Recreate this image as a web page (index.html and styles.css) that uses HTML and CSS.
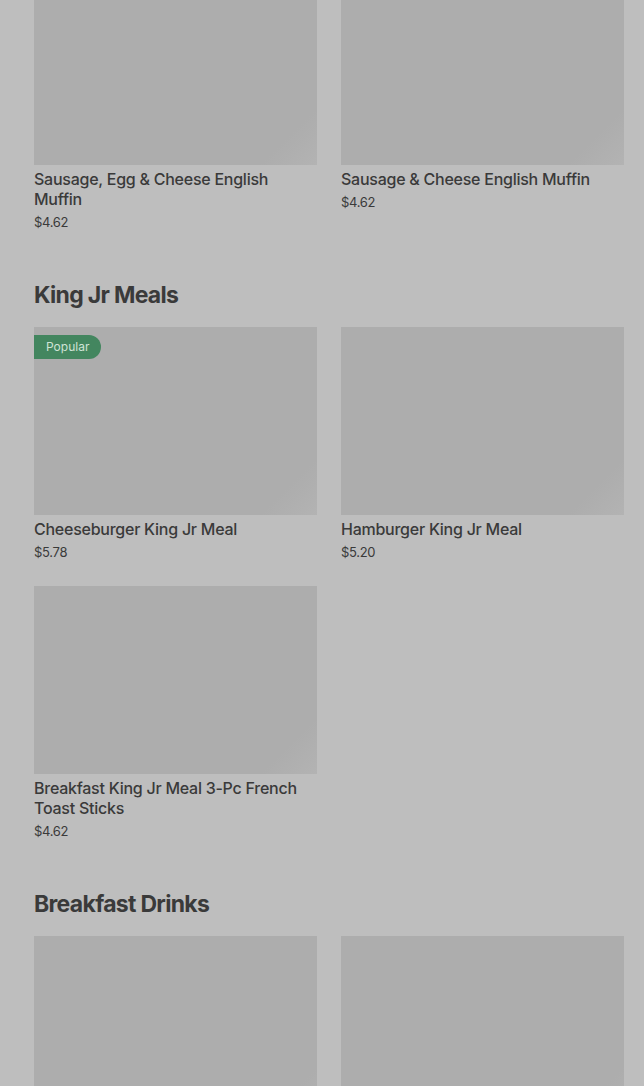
FILE: index.html
```html
<!DOCTYPE html>
<html>
<head>
<meta charset="utf-8">
<link rel="stylesheet" href="styles.css">
</head>
<body>
<main class="menu">
  <section class="section first">
    <div class="grid">
      <div class="item">
        <div class="thumb"></div>
        <div class="name">Sausage, Egg &amp; Cheese English Muffin</div>
        <div class="price">$4.62</div>
      </div>
      <div class="item">
        <div class="thumb"></div>
        <div class="name">Sausage &amp; Cheese English Muffin</div>
        <div class="price">$4.62</div>
      </div>
    </div>
  </section>
  <section class="section">
    <h2 class="heading">King Jr Meals</h2>
    <div class="grid">
      <div class="item">
        <div class="thumb"><span class="badge">Popular</span></div>
        <div class="name">Cheeseburger King Jr Meal</div>
        <div class="price">$5.78</div>
      </div>
      <div class="item">
        <div class="thumb"></div>
        <div class="name">Hamburger King Jr Meal</div>
        <div class="price">$5.20</div>
      </div>
      <div class="item">
        <div class="thumb"></div>
        <div class="name">Breakfast King Jr Meal 3-Pc French Toast Sticks</div>
        <div class="price">$4.62</div>
      </div>
    </div>
  </section>
  <section class="section">
    <h2 class="heading">Breakfast Drinks</h2>
    <div class="grid">
      <div class="item">
        <div class="thumb"></div>
      </div>
      <div class="item">
        <div class="thumb"></div>
      </div>
    </div>
  </section>
</main>
</body>
</html>
```
FILE: styles.css
```css
html, body {
  margin: 0;
  padding: 0;
  background: #bebebe;
  overflow: hidden;
}
body {
  font-family: Inter, "Noto Sans", sans-serif;
  color: #3a3a3a;
}
.menu {
  padding: 0 20px 0 34px;
  margin-top: -23px;
}
.section {
  padding-bottom: 48px;
}
.heading {
  margin: 0;
  height: 46px;
  font-size: 23px;
  line-height: 28px;
  font-weight: 700;
  letter-spacing: -0.7px;
  color: #3a3a3a;
  padding-top: 2px;
}
.grid {
  display: grid;
  grid-template-columns: 1fr 1fr;
  column-gap: 24px;
  row-gap: 25px;
}
.thumb {
  position: relative;
  height: 188px;
  background: linear-gradient(135deg, #adadad 0%, #adadad 88%, #b3b3b3 100%);
}
.badge {
  position: absolute;
  left: 0;
  top: 8px;
  height: 24px;
  line-height: 24px;
  padding: 0 12px;
  font-size: 12px;
  color: #cfe3d6;
  background: #43865f;
  border-radius: 0 12px 12px 0;
}
.name {
  margin-top: 4px;
  font-size: 16px;
  line-height: 20px;
  font-weight: 500;
  letter-spacing: -0.25px;
}
.price {
  margin-top: 4px;
  font-size: 13px;
  line-height: 18px;
  letter-spacing: -0.3px;
}
```
